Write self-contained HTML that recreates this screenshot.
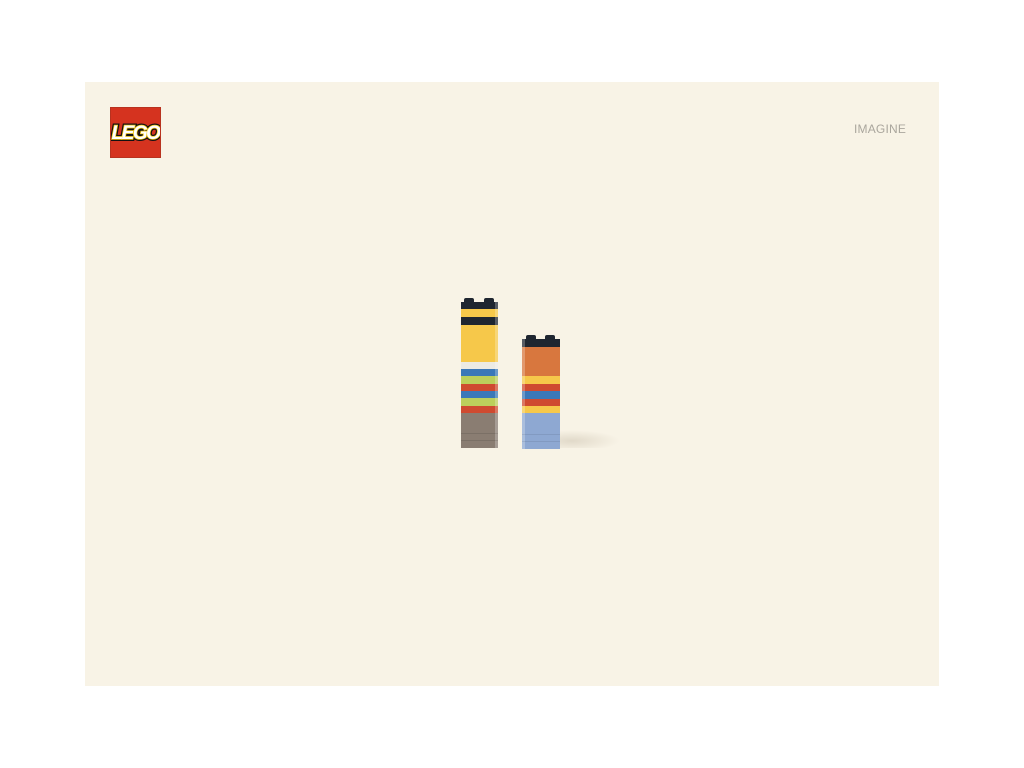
<!DOCTYPE html>
<html><head><meta charset="utf-8"><style>
body{margin:0;width:1024px;height:768px;background:#fff;position:relative;overflow:hidden;font-family:"Liberation Sans",sans-serif}
.panel{position:absolute;left:85px;top:82px;width:854px;height:604px;background:#f8f3e6}
.logo{position:absolute;left:111px;top:108px;width:49px;height:49px;background:#d5331f;box-shadow:0 0 0 1px #b8321f}
.im{position:absolute;left:854px;top:122px;font-size:12px;color:#aaa69d;letter-spacing:0.2px}
.b{position:absolute}
.stud{position:absolute;height:4px;width:10px;background:#1f2630;border-radius:2px 2px 0 0}
.shadow{position:absolute;left:540px;top:430px;width:80px;height:18px;background:radial-gradient(ellipse at 40% 60%,rgba(120,100,70,0.18),rgba(120,100,70,0) 70%)}
</style></head><body>
<div class="panel"></div>
<div class="logo"><svg width="49" height="49" viewBox="0 0 49 49">
<text x="24.5" y="31" text-anchor="middle" font-family="Liberation Sans" font-weight="bold" font-style="italic" font-size="19" fill="#fff" stroke="#111" stroke-width="4" paint-order="stroke" letter-spacing="-1.5">LEGO</text>
<text x="24.5" y="31" text-anchor="middle" font-family="Liberation Sans" font-weight="bold" font-style="italic" font-size="19" fill="#fff" stroke="#f4c91b" stroke-width="1.5" paint-order="stroke" letter-spacing="-1.5">LEGO</text>
</svg></div>
<div class="im">IMAGINE</div>
<div class="shadow"></div>
<div class="stud" style="left:464px;top:298px"></div><div class="stud" style="left:484px;top:298px"></div>
<div class="b" style="left:461px;top:302px;width:37px;height:146px;background:linear-gradient(#1f2630 0 7px,#f6c84a 7px 15px,#1f2630 15px 23px,#f6c84a 23px 60px,#eceae4 60px 67px,#3b78b8 67px 74px,#bccf5c 74px 82px,#cf4a30 82px 89px,#3b78b8 89px 96px,#bccf5c 96px 104px,#cf4a30 104px 111px,#8a7d72 111px 146px)"></div>
<div class="b" style="left:495px;top:302px;width:3px;height:146px;background:rgba(255,255,255,0.25)"></div>
<div class="b" style="left:461px;top:433px;width:37px;height:1px;background:rgba(0,0,0,0.1)"></div>
<div class="b" style="left:461px;top:440px;width:37px;height:1px;background:rgba(0,0,0,0.1)"></div>
<div class="stud" style="left:526px;top:335px"></div><div class="stud" style="left:545px;top:335px"></div>
<div class="b" style="left:522px;top:339px;width:38px;height:110px;background:linear-gradient(#1f2630 0 8px,#d8773e 8px 37px,#f6c84a 37px 45px,#cf4a30 45px 52px,#3b78b8 52px 60px,#cf4a30 60px 67px,#f6c84a 67px 74px,#8ea8d2 74px 110px)"></div>
<div class="b" style="left:522px;top:339px;width:3px;height:110px;background:rgba(255,255,255,0.25)"></div>
<div class="b" style="left:522px;top:434px;width:38px;height:1px;background:rgba(0,0,0,0.08)"></div>
<div class="b" style="left:522px;top:441px;width:38px;height:1px;background:rgba(0,0,0,0.08)"></div>
</body></html>
